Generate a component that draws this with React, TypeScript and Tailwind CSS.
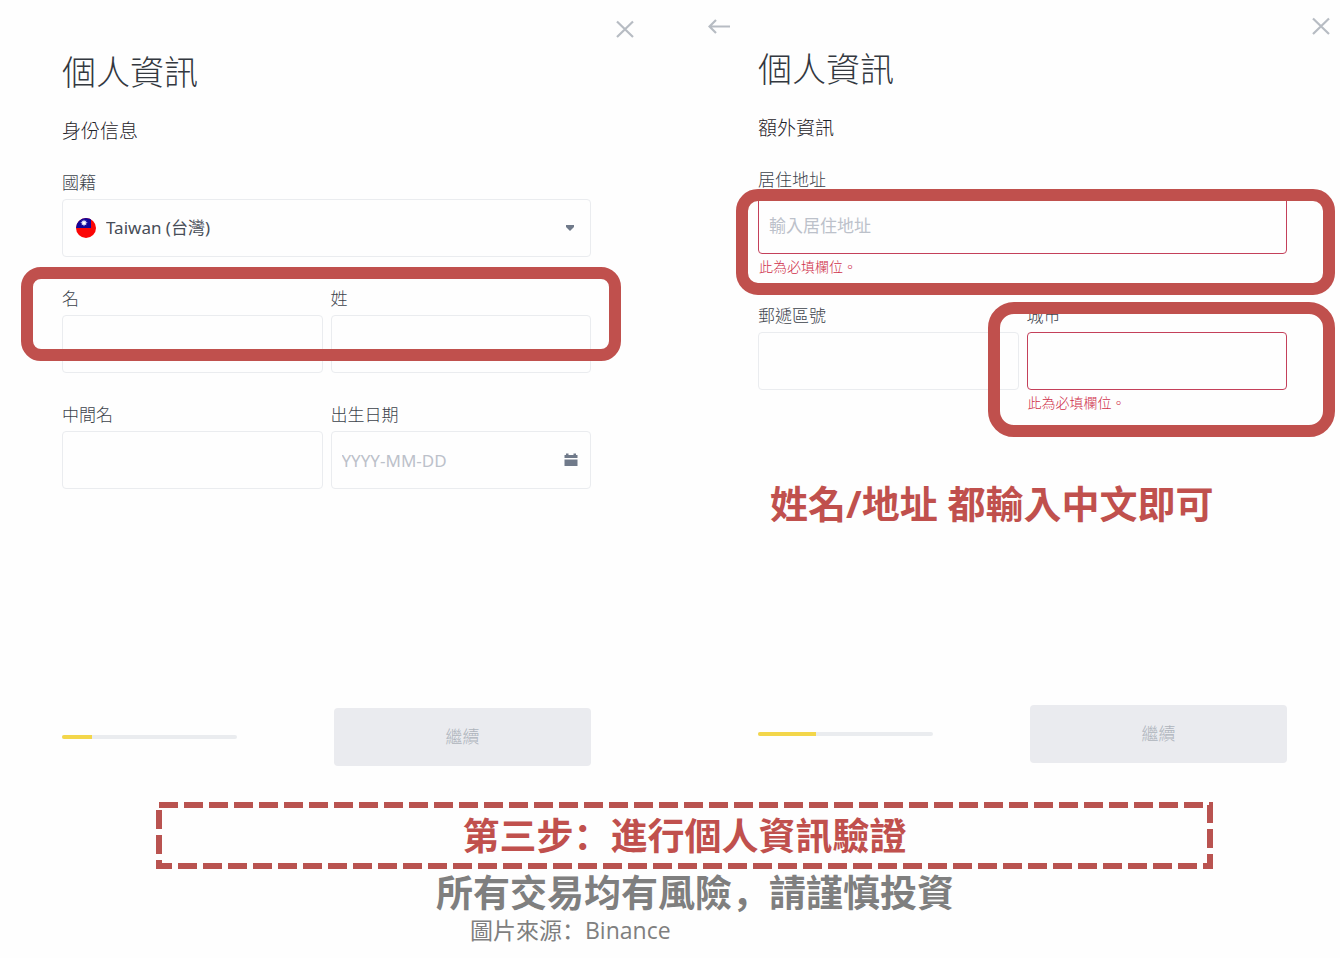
import type { ReactNode } from 'react';

const inputBase =
  'block h-[58px] w-full rounded-[4px] border bg-transparent px-[10px] text-[17px] text-[#474d57] outline-none placeholder:text-[#bcc1ca] placeholder:opacity-100';

function Label({ htmlFor, children }: { htmlFor: string; children: ReactNode }) {
  return (
    <label htmlFor={htmlFor} className="mb-[2px] block text-[17px] leading-[28px] font-light text-[#3c424b]">
      {children}
    </label>
  );
}

function Field({
  id,
  label,
  placeholder,
  error,
  icon,
}: {
  id: string;
  label: string;
  placeholder?: string;
  error?: string;
  icon?: ReactNode;
}) {
  return (
    <div>
      <Label htmlFor={id}>{label}</Label>
      <div className="relative">
        <input
          id={id}
          type="text"
          placeholder={placeholder}
          className={`${inputBase} ${error ? 'border-[#c4405a]' : 'border-[#eaecef]'}`}
        />
        {icon}
      </div>
      {error && <p className="mt-1 pl-px text-[14px] leading-[18px] font-light text-[#cf304a]">{error}</p>}
    </div>
  );
}

function CloseButton() {
  return (
    <button type="button" aria-label="關閉" className="ml-auto block size-5 text-[#b7bcc3]">
      <svg viewBox="0 0 20 20" className="size-5" fill="none" stroke="currentColor" strokeWidth="2.2">
        <path d="M2 2.500L18 18M18 2.500L2 18" />
      </svg>
    </button>
  );
}

function BackButton() {
  return (
    <button type="button" aria-label="返回" className="block h-5 w-[22px] text-[#b7bcc3]">
      <svg viewBox="0 0 22 20" className="h-5 w-[22px]" fill="none" stroke="currentColor" strokeWidth="2.2">
        <path d="M22 10.500H2M8 4L1.500 10.500L8 17" />
      </svg>
    </button>
  );
}

function Flag() {
  return (
    <svg viewBox="0 0 20 20" className="pointer-events-none absolute top-[19px] left-[14px] size-5">
      <defs>
        <clipPath id="flag-clip">
          <circle cx="10" cy="10" r="10" />
        </clipPath>
      </defs>
      <g clipPath="url(#flag-clip)">
        <rect width="20" height="20" fill="#fb0606" />
        <rect width="15" height="10" fill="#12059a" />
        <path
          d="M8 1.4l.8 1.6 1.6-.6-.4 1.7 1.7.7-1.7.8.4 1.7-1.6-.6L8 8.5l-.8-1.8-1.6.6.4-1.7-1.7-.8L6 4.100l-.4-1.700 1.600.6z"
          fill="#c9c9f2"
        />
        <circle cx="8" cy="4.900" r="1.500" fill="#fff" />
      </g>
    </svg>
  );
}

function CalendarIcon() {
  return (
    <svg viewBox="0 0 14 14" className="pointer-events-none absolute top-[22px] right-[13px] size-[14px]" fill="#707a8a">
      <path d="M.5 2h1.500V.5h2.500V2h5V.5H12V2h1.500v3H.5zM.5 6.500h13v6.500H.5z" />
    </svg>
  );
}

function Titles({ title, subtitle }: { title: string; subtitle: string }) {
  return (
    <>
      <h1 className="text-[34px] leading-[44px] font-light text-[#33383f]">{title}</h1>
      <h2 className="mt-[23px] mb-[24px] text-[19px] leading-[28px] font-light text-[#1e2329]">{subtitle}</h2>
    </>
  );
}

function Footer({ percent }: { percent: number }) {
  return (
    <div className="flex items-center justify-between">
      <div
        role="progressbar"
        aria-label="進度"
        aria-valuenow={percent}
        className="h-1 w-[33%] overflow-hidden rounded-[2px] bg-[#eaecef]"
      >
        <div className="h-full bg-[#f3d64a]" style={{ width: `${percent}%` }} />
      </div>
      <button type="button" disabled className="h-[58px] w-[257px] rounded-[4px] bg-[#eaebef] text-[17px] font-light text-[#aeb4bc]">
        繼續
      </button>
    </div>
  );
}

export default function App() {
  return (
    <main
      lang="zh-Hant"
      className="min-h-screen bg-[#fefefe] font-['Noto_Sans','Noto_Sans_CJK_TC',sans-serif]"
    >
      <div className="grid grid-cols-2 items-start gap-[52px]">
        <section className="pt-[19px]">
          <header className="flex pr-[9px]">
            <CloseButton />
          </header>
          <form className="pt-[11px] pr-[53px] pl-[62px]">
            <Titles title="個人資訊" subtitle="身份信息" />
            <Label htmlFor="country">國籍</Label>
            <div className="relative">
              <Flag />
              <select
                id="country"
                className="block h-[58px] w-full appearance-none rounded-[4px] border border-[#eaecef] bg-transparent pr-10 pl-[43px] text-[17px] text-[#474d57] outline-none"
              >
                <option>Taiwan (台灣)</option>
              </select>
              <svg viewBox="0 0 10 6" className="pointer-events-none absolute top-[26px] right-4 h-[6px] w-[10px]" fill="#707a8a">
                <path d="M1 0h8v2L5 6 1 2z" />
              </svg>
            </div>

            <div className="relative mt-7 grid grid-cols-2 gap-2">
              <Field id="first-name" label="名" />
              <Field id="last-name" label="姓" />
              <div className="pointer-events-none absolute -top-[18px] -right-[30px] bottom-3 -left-[41px] rounded-[20px] border-12 border-[#c0504d]" />
            </div>

            <div className="mt-7 mb-[219px] grid grid-cols-2 gap-2">
              <Field id="middle-name" label="中間名" />
              <Field id="birthday" label="出生日期" placeholder="YYYY-MM-DD" icon={<CalendarIcon />} />
            </div>
            <Footer percent={17} />
          </form>
        </section>

        <section className="pt-4">
          <header className="flex pr-[9px] pl-3">
            <BackButton />
            <CloseButton />
          </header>
          <form className="pt-[11px] pr-[53px] pl-[62px]">
            <Titles title="個人資訊" subtitle="額外資訊" />
            <div className="relative">
              <Field id="address" label="居住地址" placeholder="輸入居住地址" error="此為必填欄位。" />
              <div className="pointer-events-none absolute top-[23px] -right-12 -bottom-[19px] -left-[22px] rounded-[22px] border-12 border-[#c0504d]" />
            </div>

            <div className="mt-[26px] grid grid-cols-2 gap-2">
              <Field id="postcode" label="郵遞區號" />
              <div className="relative">
                <Field id="city" label="城市" error="此為必填欄位。" />
                <div className="pointer-events-none absolute top-0 -right-12 -bottom-[25px] -left-[39px] rounded-[26px] border-12 border-[#c0504d]" />
              </div>
            </div>

            <p className="mt-[67px] mb-[178px] pl-3 font-['Open_Sans','Noto_Sans_CJK_SC',sans-serif] text-[38px] leading-[48px] font-bold whitespace-nowrap text-[#c0504d]">
              姓名/地址 都輸入中文即可
            </p>
            <Footer percent={33} />
          </form>
        </section>
      </div>

      <footer
        lang="zh-Hans"
        className="pt-9 font-['Open_Sans','Noto_Sans_CJK_SC',sans-serif]"
      >
        <div className="relative mr-[127px] ml-[156px] flex h-[67px] items-center justify-center">
          <svg className="pointer-events-none absolute inset-0 size-full overflow-visible p-[3px]" fill="none" aria-hidden="true">
            <rect width="100%" height="100%" stroke="#b95350" strokeWidth="6" strokeDasharray="19 6" />
          </svg>
          <h2 className="text-[37px] leading-[48px] font-bold text-[#c0504d]">第三步：進行個人資訊驗證</h2>
        </div>
        <div className="flex justify-center pl-[50px]">
          <div>
            <p className="text-[37px] leading-[48px] font-bold text-[#7f7f7f]">所有交易均有風險，請謹慎投資</p>
            <p className="pl-[34px] text-[23px] leading-[26px] text-[#7f7f7f]">圖片來源：Binance</p>
          </div>
        </div>
      </footer>
    </main>
  );
}
